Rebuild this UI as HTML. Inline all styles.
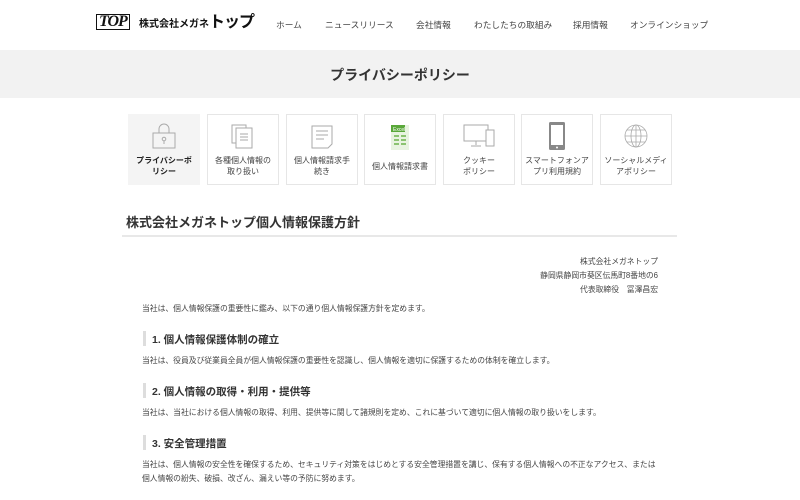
<!DOCTYPE html>
<html><head><meta charset="utf-8"><style>
*{margin:0;padding:0;box-sizing:border-box}
body{width:800px;height:500px;overflow:hidden;background:#fff;font-family:"Liberation Sans","Noto Sans CJK JP",sans-serif;color:#333;position:relative}
.abs{position:absolute;white-space:nowrap}
.nav{top:18px;font-size:8.7px;color:#444}
.band{position:absolute;left:0;top:50px;width:800px;height:48px;background:#f2f2f2}
.tab{position:absolute;top:114px;width:72px;height:71px;border:1px solid #e6e6e6;background:#fff;font-size:8px;line-height:11px;text-align:center;color:#444}
.tab.on{background:#f4f4f4;border-color:#f4f4f4;font-weight:bold;color:#222}
.tab svg{position:absolute;left:50%;transform:translateX(-50%);top:8px}
.tab .t{position:absolute;left:0;right:0;top:40px}
.p{font-size:7.8px;color:#444}
.h{font-size:10.5px;font-weight:bold;color:#333}
.bar{position:absolute;left:143px;width:3px;height:15px;background:#ddd}
</style></head><body>
<div class="abs" style="left:96px;top:14px;font-family:'Liberation Serif';font-size:16px;font-weight:bold;font-style:italic;color:#111;border:1.5px solid #111;padding:0 2px;line-height:14px;letter-spacing:-1px">TOP</div>
<div class="abs" style="left:139px;top:14px;font-size:10px;font-weight:bold;color:#111;line-height:18px">株式会社メガネ<span style="font-size:16px;letter-spacing:-1px">トップ</span></div>
<div class="abs nav" style="left:276px">ホーム</div>
<div class="abs nav" style="left:325px">ニュースリリース</div>
<div class="abs nav" style="left:416px">会社情報</div>
<div class="abs nav" style="left:474px">わたしたちの取組み</div>
<div class="abs nav" style="left:573px">採用情報</div>
<div class="abs nav" style="left:630px">オンラインショップ</div>
<div class="band"></div>
<div class="abs" style="left:0;width:800px;text-align:center;top:65px;font-size:14px;font-weight:bold;color:#333">プライバシーポリシー</div>

<div class="tab on" style="left:128px"><svg width="26" height="26" viewBox="0 0 26 26" fill="none" stroke="#aaa" stroke-width="1"><path d="M8 10V6a5 5 0 0 1 10 0v4"/><rect x="2" y="10" width="22" height="15"/><circle cx="13" cy="16" r="1.8"/><path d="M13 18v3"/></svg><div class="t">プライバシーポ<br>リシー</div></div>
<div class="tab" style="left:207px"><svg width="26" height="28" viewBox="0 0 26 28" fill="none" stroke="#aaa"><rect x="2" y="2" width="14" height="18"/><rect x="6" y="5" width="16" height="20" fill="#fff"/><path d="M10 11h8M10 14h8M10 17h8"/></svg><div class="t">各種個人情報の<br>取り扱い</div></div>
<div class="tab" style="left:286px"><svg width="26" height="28" viewBox="0 0 26 28" fill="none" stroke="#aaa"><path d="M3 3h20v18l-4 4H3z"/><path d="M7 8h12M7 12h12M7 16h8"/></svg><div class="t">個人情報請求手<br>続き</div></div>
<div class="tab" style="left:364px"><svg width="22" height="28" viewBox="0 0 22 28"><rect x="2" y="2" width="18" height="25" fill="#e8f3e0"/><rect x="2" y="2" width="14" height="7" fill="#5aa83a"/><text x="4" y="8" font-size="5" fill="#fff" font-family="Liberation Sans">Excel</text><path d="M5 13h5M12 13h5M5 17h5M12 17h5M5 21h5M12 21h5" stroke="#6cb34a" stroke-width="1.6"/></svg><div class="t" style="top:46px">個人情報請求書</div></div>
<div class="tab" style="left:443px"><svg width="34" height="26" viewBox="0 0 34 26" fill="none" stroke="#aaa"><rect x="2" y="2" width="24" height="16"/><rect x="24" y="7" width="8" height="16" fill="#fff"/><path d="M14 18v4M9 23h10"/></svg><div class="t">クッキー<br>ポリシー</div></div>
<div class="tab" style="left:521px"><svg width="18" height="30" viewBox="0 0 18 30" style="top:6px"><rect x="1" y="1" width="16" height="28" rx="1.5" fill="#888"/><rect x="3" y="4" width="12" height="20" fill="#fff"/><circle cx="9" cy="26.5" r="1" fill="#fff"/></svg><div class="t">スマートフォンア<br>プリ利用規約</div></div>
<div class="tab" style="left:600px"><svg width="26" height="26" viewBox="0 0 26 26" fill="none" stroke="#aaa" stroke-width=".8"><circle cx="13" cy="13" r="11"/><ellipse cx="13" cy="13" rx="5" ry="11"/><path d="M2 13h22M13 2v22M4 7h18M4 19h18"/></svg><div class="t">ソーシャルメディ<br>アポリシー</div></div>

<div class="abs" style="left:126px;top:212px;font-size:13px;font-weight:bold;color:#333">株式会社メガネトップ個人情報保護方針</div>
<div class="abs" style="left:122px;top:235px;width:555px;height:2px;background:#e8e8e8"></div>

<div class="abs p" style="right:142px;top:256px">株式会社メガネトップ</div>
<div class="abs p" style="right:142px;top:270px">静岡県静岡市葵区伝馬町8番地の6</div>
<div class="abs p" style="right:142px;top:284px">代表取締役　冨澤昌宏</div>
<div class="abs p" style="left:142px;top:303px">当社は、個人情報保護の重要性に鑑み、以下の通り個人情報保護方針を定めます。</div>

<div class="bar" style="top:331px"></div>
<div class="abs h" style="left:152px;top:332px">1. 個人情報保護体制の確立</div>
<div class="abs p" style="left:142px;top:355px">当社は、役員及び従業員全員が個人情報保護の重要性を認識し、個人情報を適切に保護するための体制を確立します。</div>

<div class="bar" style="top:383px"></div>
<div class="abs h" style="left:152px;top:384px">2. 個人情報の取得・利用・提供等</div>
<div class="abs p" style="left:142px;top:407px">当社は、当社における個人情報の取得、利用、提供等に関して諸規則を定め、これに基づいて適切に個人情報の取り扱いをします。</div>

<div class="bar" style="top:435px"></div>
<div class="abs h" style="left:152px;top:436px">3. 安全管理措置</div>
<div class="abs p" style="left:142px;top:459px">当社は、個人情報の安全性を確保するため、セキュリティ対策をはじめとする安全管理措置を講じ、保有する個人情報への不正なアクセス、または</div>
<div class="abs p" style="left:142px;top:473px">個人情報の紛失、破損、改ざん、漏えい等の予防に努めます。</div>
</body></html>
